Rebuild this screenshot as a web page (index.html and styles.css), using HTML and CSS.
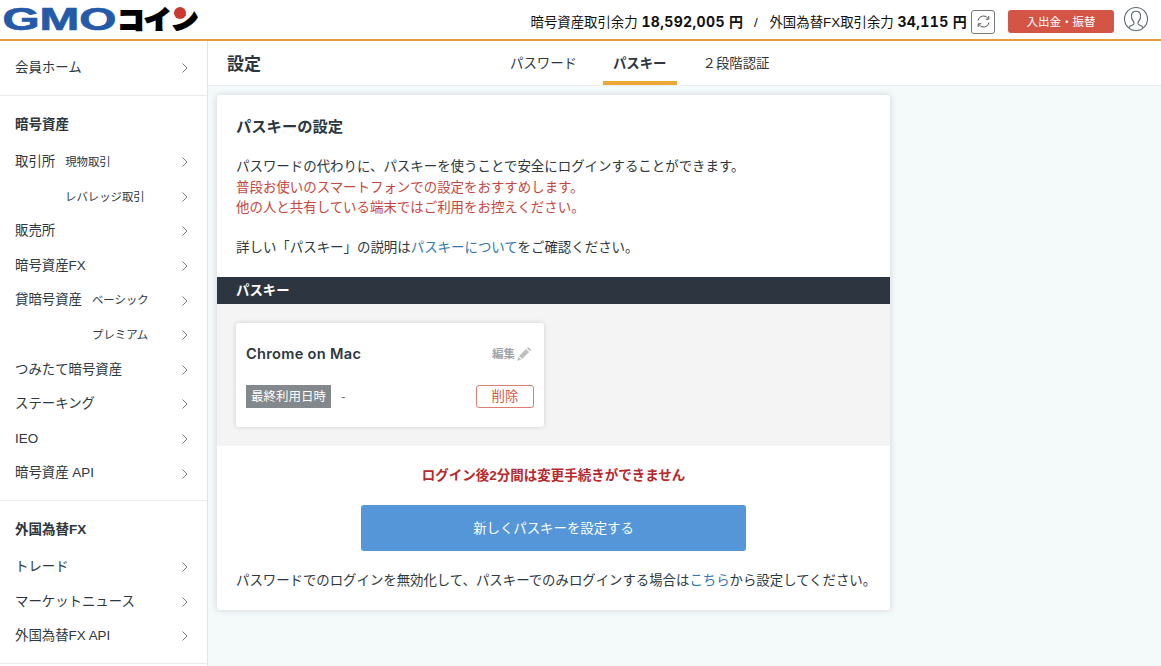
FILE: index.html
```html
<!DOCTYPE html>
<html lang="ja">
<head>
  <meta charset="UTF-8" />
  <meta name="viewport" content="width=device-width, initial-scale=1" />
  <title>設定 | GMOコイン</title>
  <link rel="stylesheet" href="styles.css">
</head>
<body>
  <svg class="defs">
    <symbol id="arrow" viewBox="0 0 8 12"><path d="M1.5 1.5 6 6 1.5 10.5" fill="none" stroke="#737b82" stroke-width="1" /></symbol>
  </svg>

  <header class="site-header">
    <svg class="logo" width="205" height="39" viewBox="0 0 205 39">
      <text class="logo-gmo" x="2.5" y="30.2" textLength="114" lengthAdjust="spacingAndGlyphs">GMO</text>
      <text class="logo-coin" x="117.5" y="28.5" textLength="80.5" lengthAdjust="spacingAndGlyphs">コイン</text>
      <path d="M171 4h16v9l-5 6h-9Z" fill="#fff" />
      <circle cx="180" cy="13" r="6" fill="#cb3a2f" />
    </svg>
    <div class="balance">
      暗号資産取引余力 <b class="amount">18,592,005 円</b>
      <span class="slash">/</span>
      外国為替FX取引余力 <b class="amount">34,115 円</b>
    </div>
    <button class="reload">
      <svg width="15" height="15" viewBox="0 0 15 15" fill="none" stroke="#555" stroke-width="1">
        <path d="M2 6.5A5.6 5.6 0 0 1 12.4 4.8M13 8.5A5.6 5.6 0 0 1 2.6 10.2" />
        <path d="M12.8 2v3.2H9.6M2.2 13V9.8h3.2" />
      </svg>
    </button>
    <button class="deposit">入出金・振替</button>
    <svg class="user" width="26" height="26" viewBox="0 0 26 26" fill="none" stroke="#5b6770" stroke-width="1.1">
      <circle cx="13" cy="13" r="11.5" />
      <path d="M6 21.8c.4-1.9 2-2.5 4-3.1 1.4-.5 1.4-1.8.5-3-1.6-2-2.4-4-2-6.5.4-2.5 2-4 4.5-4s4.100 1.500 4.500 4c.4 2.500-.4 4.500-2 6.500-.9 1.200-.9 2.500.5 3 2 .6 3.600 1.200 4 3.100" />
    </svg>
  </header>

  <div class="layout">
    <nav class="sidebar">
      <section class="home">
        <a class="item">会員ホーム<svg class="arrow"><use href="#arrow" /></svg></a>
      </section>
      <section class="crypto">
        <h2>暗号資産</h2>
        <a class="item">取引所<small>現物取引</small><svg class="arrow"><use href="#arrow" /></svg></a>
        <a class="item sub-exchange"><small>レバレッジ取引</small><svg class="arrow"><use href="#arrow" /></svg></a>
        <a class="item">販売所<svg class="arrow"><use href="#arrow" /></svg></a>
        <a class="item">暗号資産FX<svg class="arrow"><use href="#arrow" /></svg></a>
        <a class="item">貸暗号資産<small>ベーシック</small><svg class="arrow"><use href="#arrow" /></svg></a>
        <a class="item sub-lending"><small>プレミアム</small><svg class="arrow"><use href="#arrow" /></svg></a>
        <a class="item">つみたて暗号資産<svg class="arrow"><use href="#arrow" /></svg></a>
        <a class="item">ステーキング<svg class="arrow"><use href="#arrow" /></svg></a>
        <a class="item">IEO<svg class="arrow"><use href="#arrow" /></svg></a>
        <a class="item">暗号資産 API<svg class="arrow"><use href="#arrow" /></svg></a>
      </section>
      <section class="forex">
        <h2>外国為替FX</h2>
        <a class="item">トレード<svg class="arrow"><use href="#arrow" /></svg></a>
        <a class="item">マーケットニュース<svg class="arrow"><use href="#arrow" /></svg></a>
        <a class="item">外国為替FX API<svg class="arrow"><use href="#arrow" /></svg></a>
      </section>
    </nav>

    <main class="content">
      <div class="page-head">
        <h1>設定</h1>
        <div class="tabs">
          <a class="tab">パスワード</a>
          <a class="tab active">パスキー</a>
          <a class="tab">２段階認証</a>
        </div>
      </div>

      <div class="panel">
        <div class="intro">
          <h3>パスキーの設定</h3>
          <p>パスワードの代わりに、パスキーを使うことで安全にログインすることができます。</p>
          <p class="warn">普段お使いのスマートフォンでの設定をおすすめします。<br>他の人と共有している端末ではご利用をお控えください。</p>
          <p class="detail">詳しい「パスキー」の説明は<a>パスキーについて</a>をご確認ください。</p>
        </div>
        <h4 class="bar">パスキー</h4>
        <div class="keys">
          <div class="key">
            <div class="row">
              <span class="key-name">Chrome on Mac</span>
              <a class="edit">編集
                <svg width="14" height="14" viewBox="0 0 14 14" fill="#bdbfc1">
                  <path d="M.3 13.7 1.2 9.7 4.3 12.8ZM2 8.9 9 1.9 12.1 5 5.1 12ZM9.8 1.1 10.6.4q.6-.5 1.2 0l1.9 1.9q.5.6 0 1.2l-.8.7Z" />
                </svg>
              </a>
            </div>
            <div class="row">
              <span><span class="label">最終利用日時</span><span class="last-used">-</span></span>
              <button class="delete">削除</button>
            </div>
          </div>
        </div>
        <div class="actions">
          <p class="notice">ログイン後2分間は変更手続きができません</p>
          <button class="add">新しくパスキーを設定する</button>
          <p class="only">パスワードでのログインを無効化して、パスキーでのみログインする場合は<a>こちら</a>から設定してください。</p>
        </div>
      </div>
    </main>
  </div>
</body>
</html>
```
FILE: styles.css
```css
* {
  box-sizing: border-box;
}
body {
  margin: 0;
  height: 666px;
  overflow: hidden;
  font-family: "Liberation Sans", "Noto Sans CJK JP", sans-serif;
  font-size: 13.4px;
  line-height: 20.5px;
  color: #2d3741;
  background: #f4f9fa;
}
h1, h2, h3, h4, p {
  margin: 0;
}
button {
  padding: 0;
  font-family: inherit;
  cursor: pointer;
}
.defs {
  display: none;
}

/* header */
.site-header {
  display: flex;
  align-items: center;
  height: 41px;
  padding-right: 12px;
  background: #fff;
  border-bottom: 2px solid #e89c3c;
}
.logo {
  flex: none;
  margin-right: auto;
}
.logo-gmo {
  font: bold 31px "Liberation Sans", sans-serif;
  fill: #245aa8;
  stroke: #245aa8;
  stroke-width: .7px;
}
.logo-coin {
  font: 900 25px "Noto Sans CJK JP", sans-serif;
  fill: #000;
  stroke: #000;
  stroke-width: 1.8px;
}
.balance {
  padding-top: 6px;
  color: #111;
  white-space: nowrap;
}
.amount {
  font-family: Inter, "Noto Sans CJK JP", sans-serif;
  font-size: 14px;
  font-variant-numeric: tabular-nums;
  letter-spacing: .35px;
}
.slash {
  margin: 0 8px 0 7px;
}
.reload {
  display: flex;
  align-items: center;
  justify-content: center;
  width: 24px;
  height: 24px;
  margin: 4px 13px 0 4px;
  background: #fff;
  border: 1px solid #777;
  border-radius: 3px;
}
.deposit {
  width: 106px;
  height: 23px;
  margin: 4px 9px 0 0;
  padding-bottom: 2px;
  font-size: 11.5px;
  color: #fff;
  background: #d25546;
  border: 0;
  border-radius: 3px;
}
.user {
  flex: none;
  margin-top: -1px;
}

/* sidebar */
.layout {
  display: flex;
  height: 625px;
}
.sidebar {
  flex: none;
  width: 208px;
  background: #fff;
  border-right: 1px solid #dfe4e6;
}
.sidebar section {
  padding: 0 18px 0 15px;
  border-bottom: 1px solid #e9ebec;
}
.sidebar .home {
  height: 55px;
  padding-top: 10px;
}
.sidebar .crypto {
  height: 405px;
  padding-top: 18px;
}
.sidebar .forex {
  height: 163px;
  padding-top: 18px;
}
.sidebar h2 {
  height: 31px;
  font-size: 13.5px;
  line-height: 21px;
}
.item {
  display: flex;
  align-items: center;
  height: 34.6px;
  white-space: nowrap;
}
.item small {
  margin-left: 10px;
  font-size: 11.4px;
}
.sub-exchange {
  padding-left: 40px;
}
.sub-lending {
  padding-left: 67px;
}
.arrow {
  width: 8px;
  height: 12px;
  margin-left: auto;
}

/* page head */
.content {
  flex: 1;
}
.page-head {
  display: flex;
  height: 45px;
  padding-left: 19px;
  background: #fff;
  border-bottom: 1px solid #e9eef0;
}
.page-head h1 {
  width: 273px;
  font-size: 17px;
  line-height: 47px;
}
.tabs {
  display: flex;
  gap: 16px;
}
.tab {
  height: 44px;
  padding: 0 10px;
  line-height: 45px;
}
.tab.active {
  font-weight: bold;
  border-bottom: 4px solid #eea636;
}

/* panel */
.panel {
  width: 673px;
  height: 515px;
  margin: 9px 0 0 9px;
  background: #fff;
  border-radius: 3px;
  box-shadow: 0 0 6px rgba(60, 50, 80, .2);
}
.panel a {
  color: #3377b0;
}
.intro {
  height: 182px;
  padding: 21px 19px 0;
  font-size: 13.45px;
}
.intro h3 {
  margin-bottom: 20px;
  font-size: 15.3px;
  line-height: 21px;
}
.warn {
  color: #c84640;
}
.detail {
  margin-top: 19px;
}
.bar {
  height: 27px;
  padding-left: 19px;
  font-size: 13.4px;
  line-height: 27px;
  color: #fff;
  background: #2d3640;
}
.keys {
  height: 142px;
  padding: 19px;
  background: #f4f4f4;
}
.key {
  width: 308px;
  height: 104px;
  padding: 19px 10px 0;
  background: #fff;
  border-radius: 3px;
  box-shadow: 0 0 5px rgba(0, 0, 0, .15);
}
.row {
  display: flex;
  align-items: center;
  justify-content: space-between;
  height: 24px;
}
.row + .row {
  margin-top: 18px;
}
.key-name {
  font: 600 14.6px Inter, sans-serif;
  letter-spacing: .3px;
}
.panel .edit {
  display: flex;
  align-items: center;
  gap: 2px;
  margin-right: 3px;
  font-size: 11.5px;
  font-weight: bold;
  color: #a0a5a9;
}
.label {
  display: inline-block;
  height: 23px;
  padding: 0 5px;
  font-size: 12.5px;
  line-height: 24px;
  color: #fff;
  background: #83888c;
}
.last-used {
  margin-left: 10px;
  color: #70777d;
}
.delete {
  width: 58px;
  height: 23px;
  font-size: 13.4px;
  line-height: 21px;
  color: #d65748;
  background: #fff;
  border: 1px solid #dd7c70;
  border-radius: 3px;
}
.actions {
  padding: 20px 19px 0;
}
.notice {
  font-size: 13.5px;
  font-weight: bold;
  color: #b8282c;
  text-align: center;
}
.add {
  display: block;
  width: 385px;
  height: 46px;
  margin: 18px auto 20px;
  padding-bottom: 2px;
  font-size: 13.4px;
  color: #fff;
  background: #5496d8;
  border: 0;
  border-radius: 3px;
}
.only {
  white-space: nowrap;
}
```
